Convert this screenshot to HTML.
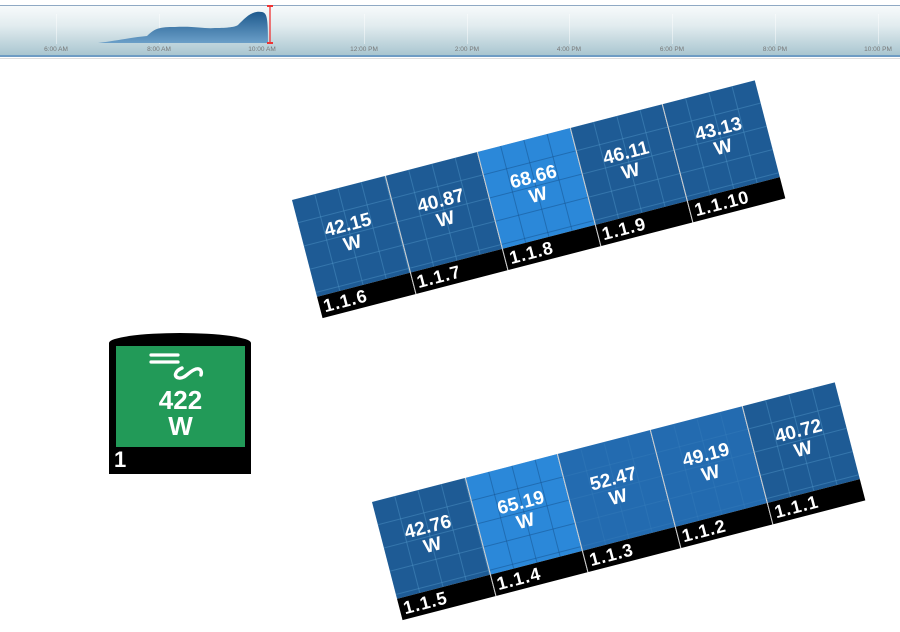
<!DOCTYPE html>
<html><head><style>
body{margin:0;width:900px;height:632px;background:#fff;position:relative;overflow:hidden;font-family:"Liberation Sans",Arial,sans-serif}
.tl{position:absolute;left:0;top:5px;width:900px;height:49px;background:linear-gradient(#f7fafb,#e2ecef 40%,#a9c6d0);border-top:1px solid #8fa9c4;border-bottom:2px solid #6e9cc4}
.tl2{position:absolute;left:0;top:58px;width:900px;height:1px;background:#ddd}
.lab{position:absolute;top:46px;font-size:6.5px;color:#777;transform:translateX(-50%);white-space:nowrap}
.gl{position:absolute;top:14px;height:30px;width:1px;background:rgba(255,255,255,.45)}
.strip{position:absolute;width:478px;height:122px;transform-origin:0 0;transform:rotate(-14.5deg);display:flex}
.p{width:95.6px;height:122px;position:relative;border-left:1px solid #ccc;box-sizing:border-box}
.p:first-child{border-left:none}
.cell{height:100px;background-color:#1e5b95;background-image:linear-gradient(90deg,rgba(80,150,200,.45) 1px,transparent 1px),linear-gradient(rgba(80,150,200,.45) 1px,transparent 1px);background-size:24px 24px,24px 24px;background-position:-1px -1px}
.b .cell{background-color:#2b88d9;background-image:linear-gradient(90deg,rgba(20,80,140,.5) 1px,transparent 1px),linear-gradient(rgba(20,80,140,.5) 1px,transparent 1px)}
.m .cell{background-color:#236bb0;background-image:linear-gradient(90deg,rgba(60,130,190,.3) 1px,transparent 1px),linear-gradient(rgba(60,130,190,.3) 1px,transparent 1px)}
.v{position:absolute;left:0;right:0;top:29px;text-align:center;color:#fff;font-weight:bold;font-size:19px;line-height:19px}
.n{height:22px;background:#000;color:#fff;font-weight:bold;font-size:18px;line-height:22px;padding-left:4px;letter-spacing:1px}
</style></head><body>
<div class="tl"></div><div class="tl2"></div>
<div class="gl" style="left:56px"></div><div class="gl" style="left:159px"></div><div class="gl" style="left:364px"></div><div class="gl" style="left:467px"></div><div class="gl" style="left:569px"></div><div class="gl" style="left:672px"></div><div class="gl" style="left:775px"></div><div class="gl" style="left:878px"></div>
<svg style="position:absolute;left:0;top:0" width="900" height="60">
<defs><linearGradient id="g" x1="0" y1="0" x2="0" y2="1"><stop offset="0" stop-color="#1e5a8e"/><stop offset="1" stop-color="#6b9fc8"/></linearGradient></defs>
<path d="M98 43 C120 40 135 37 147 36 C155 28 160 27 175 27 C195 26 205 29 215 28 C228 28 235 27 238 25 C245 18 252 10 262 12 C267 13 268 18 268 43 Z" fill="url(#g)"/>
<line x1="270" y1="6" x2="270" y2="43" stroke="#e33" stroke-width="1.3"/>
<line x1="267" y1="6" x2="273" y2="6" stroke="#e33" stroke-width="2"/>
<line x1="267" y1="43" x2="273" y2="43" stroke="#e33" stroke-width="2"/>
</svg>
<div class="lab" style="left:56px">6:00 AM</div><div class="lab" style="left:159px">8:00 AM</div><div class="lab" style="left:262px">10:00 AM</div><div class="lab" style="left:364px">12:00 PM</div><div class="lab" style="left:467px">2:00 PM</div><div class="lab" style="left:569px">4:00 PM</div><div class="lab" style="left:672px">6:00 PM</div><div class="lab" style="left:775px">8:00 PM</div><div class="lab" style="left:878px">10:00 PM</div>

<div class="strip" style="left:292px;top:200px">
<div class="p"><div class="cell"></div><div class="v">42.15<br>W</div><div class="n">1.1.6</div></div>
<div class="p"><div class="cell"></div><div class="v">40.87<br>W</div><div class="n">1.1.7</div></div>
<div class="p b"><div class="cell"></div><div class="v">68.66<br>W</div><div class="n">1.1.8</div></div>
<div class="p"><div class="cell"></div><div class="v">46.11<br>W</div><div class="n">1.1.9</div></div>
<div class="p"><div class="cell"></div><div class="v">43.13<br>W</div><div class="n">1.1.10</div></div>
</div>
<div class="strip" style="left:372px;top:502px">
<div class="p"><div class="cell"></div><div class="v">42.76<br>W</div><div class="n">1.1.5</div></div>
<div class="p b"><div class="cell"></div><div class="v">65.19<br>W</div><div class="n">1.1.4</div></div>
<div class="p m"><div class="cell"></div><div class="v">52.47<br>W</div><div class="n">1.1.3</div></div>
<div class="p m"><div class="cell"></div><div class="v">49.19<br>W</div><div class="n">1.1.2</div></div>
<div class="p"><div class="cell"></div><div class="v">40.72<br>W</div><div class="n">1.1.1</div></div>
</div>

<div style="position:absolute;left:109px;top:333px;width:142px;height:141px;background:#000;border-radius:50% 50% 0 0/10px 10px 0 0"></div>
<div style="position:absolute;left:116px;top:346px;width:129px;height:101px;background:#229a58"></div>
<svg style="position:absolute;left:109px;top:333px" width="142" height="60">
<line x1="42" y1="22" x2="69" y2="22" stroke="#fff" stroke-width="3.2" stroke-linecap="round"/>
<line x1="42" y1="29" x2="69" y2="29" stroke="#fff" stroke-width="3.2" stroke-linecap="round"/>
<path d="M73 35 C66 38 64 44 70 45 C76 46 80 38 87 36 C92 35 93 39 92 42" fill="none" stroke="#fff" stroke-width="3.4" stroke-linecap="round"/>
</svg>
<div style="position:absolute;left:116px;top:387px;width:129px;text-align:center;color:#fff;font-weight:bold;font-size:26px;line-height:26px">422<br>W</div>
<div style="position:absolute;left:114px;top:447px;color:#fff;font-weight:bold;font-size:22px;line-height:26px">1</div>
</body></html>
